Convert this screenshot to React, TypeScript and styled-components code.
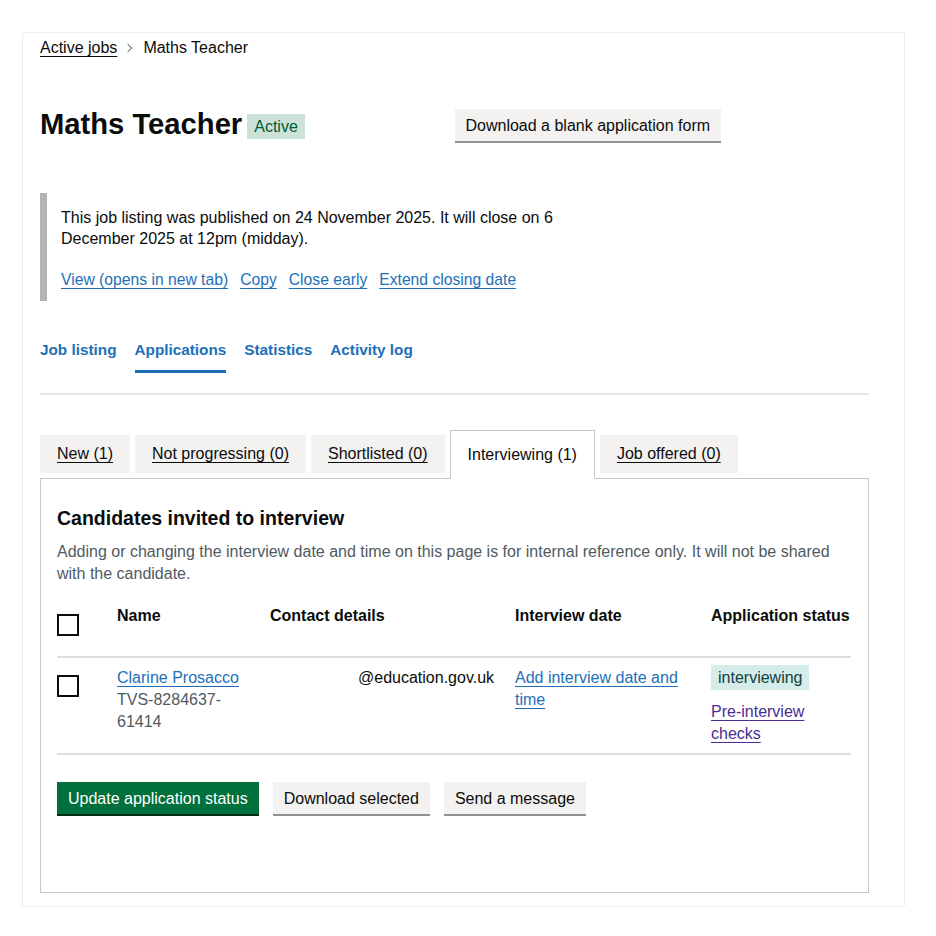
import styled, { createGlobalStyle } from "styled-components";

const Global = createGlobalStyle`
    html, body {
        margin: 0;
        background: #fff;
    }
    body {
        font-family: "Liberation Sans", Arial, sans-serif;
        color: #0b0c0c;
        -webkit-font-smoothing: antialiased;
    }
    * { box-sizing: border-box; }
`

const columns = "60px 153px 245px 196px 1fr"

const App = () => {
    return (<>
        <Global />
        <Card>
            <Breadcrumbs>
                <Crumb href="#">Active jobs</Crumb>
                <Chevron />
                <Current>Maths Teacher</Current>
            </Breadcrumbs>

            <TitleRow>
                <Title>
                    Maths Teacher
                    <Tag $tone="green">Active</Tag>
                </Title>
                <Button>Download a blank application form</Button>
            </TitleRow>

            <Inset>
                <InsetText>This job listing was published on 24 November 2025. It will close on 6 December 2025 at 12pm (midday).</InsetText>
                <InsetLinks>
                    <Link href="#">View (opens in new tab)</Link>
                    <Link href="#">Copy</Link>
                    <Link href="#">Close early</Link>
                    <Link href="#">Extend closing date</Link>
                </InsetLinks>
            </Inset>

            <SubNav>
                <SubNavItem href="#">Job listing</SubNavItem>
                <SubNavItem href="#" $active>Applications</SubNavItem>
                <SubNavItem href="#">Statistics</SubNavItem>
                <SubNavItem href="#">Activity log</SubNavItem>
            </SubNav>

            <TabList>
                <Tab>New (1)</Tab>
                <Tab>Not progressing (0)</Tab>
                <Tab>Shortlisted (0)</Tab>
                <Tab $active>Interviewing (1)</Tab>
                <Tab>Job offered (0)</Tab>
            </TabList>

            <Panel>
                <PanelHeading>Candidates invited to interview</PanelHeading>
                <Hint>Adding or changing the interview date and time on this page is for internal reference only. It will not be shared with the candidate.</Hint>

                <HeadRow>
                    <BoxCell $top={15}><Checkbox type="checkbox" /></BoxCell>
                    <HeadCell>Name</HeadCell>
                    <HeadCell>Contact details</HeadCell>
                    <HeadCell>Interview date</HeadCell>
                    <HeadCell>Application status</HeadCell>
                </HeadRow>

                <BodyRow>
                    <BoxCell $top={17}><Checkbox type="checkbox" /></BoxCell>
                    <Cell>
                        <Link href="#">Clarine Prosacco</Link>
                        <Muted>TVS-8284637-61414</Muted>
                    </Cell>
                    <Cell><Email>@education.gov.uk</Email></Cell>
                    <Cell><Link href="#">Add interview date and time</Link></Cell>
                    <StatusCell>
                        <Tag $tone="turquoise">interviewing</Tag>
                        <Checks href="#">Pre-interview checks</Checks>
                    </StatusCell>
                </BodyRow>

                <Actions>
                    <Button $primary>Update application status</Button>
                    <Button>Download selected</Button>
                    <Button>Send a message</Button>
                </Actions>
            </Panel>
        </Card>
    </>)
}

const Card = styled.div`
    margin: 32px 0 0 22px;
    width: 883px;
    border: 1px solid #ededed;
    border-radius: 2px;
    padding: 5px 35px 13px 17px;
    background: #fff;
`

const Breadcrumbs = styled.nav`
    display: flex;
    align-items: center;
    font-size: 16px;
    line-height: 20px;
`

const Crumb = styled.a`
    color: #0b0c0c;
    text-decoration: underline;
    text-decoration-thickness: 1px;
    text-underline-offset: 3px;
`

const Chevron = styled.span`
    width: 6px;
    height: 6px;
    border-top: 1px solid #6f777b;
    border-right: 1px solid #6f777b;
    transform: rotate(45deg);
    margin: 0 12px 0 8px;
`

const Current = styled.span``

const TitleRow = styled.div`
    margin-top: 49px;
    display: grid;
    grid-template-columns: 1fr 1fr;
    align-items: center;
`

const Title = styled.h1`
    margin: 0;
    display: flex;
    align-items: center;
    gap: 5px;
    font-size: 29.2px;
    line-height: 35px;
    font-weight: 700;
`

const Tag = styled.strong<{ $tone: "green" | "turquoise" }>`
    display: inline-block;
    align-self: flex-start;
    margin-top: ${p => p.$tone === "green" ? "7px" : "0"};
    padding: 2px 7px;
    font-size: 16px;
    line-height: 21px;
    font-weight: 400;
    background: ${p => p.$tone === "green" ? "#cce2d8" : "#d4ecea"};
    color: ${p => p.$tone === "green" ? "#005a30" : "#10403c"};
`

const Button = styled.button<{ $primary?: boolean }>`
    justify-self: start;
    font-family: inherit;
    font-size: 16px;
    line-height: 21px;
    padding: 6px 11px 5px;
    border: 0;
    border-radius: 0;
    background: ${p => p.$primary ? "#00703c" : "#f3f2f1"};
    color: ${p => p.$primary ? "#fff" : "#0b0c0c"};
    box-shadow: 0 2px 0 ${p => p.$primary ? "#002d18" : "#929191"};
    cursor: pointer;
`

const Inset = styled.div`
    margin-top: 51px;
    border-left: 7px solid #b1b4b6;
    padding: 14px 0 11px 14px;
    font-size: 16px;
    line-height: 21px;
`

const InsetText = styled.p`
    margin: 0;
    max-width: 520px;
`

const InsetLinks = styled.p`
    margin: 20px 0 0;
    display: flex;
    gap: 12px;
    font-size: 15.7px;
`

const Link = styled.a`
    color: #1d70b8;
    text-decoration: underline;
    text-decoration-thickness: 1px;
    text-underline-offset: 3px;
`

const SubNav = styled.nav`
    margin-top: 39px;
    display: flex;
    gap: 18px;
    padding-bottom: 20px;
    border-bottom: 2px solid #e6e6e6;
`

const SubNavItem = styled.a<{ $active?: boolean }>`
    font-size: 15.3px;
    line-height: 20px;
    font-weight: 700;
    color: #1d70b8;
    text-decoration: none;
    padding-bottom: 10px;
    border-bottom: 3px solid ${p => p.$active ? "#1d70b8" : "transparent"};
`

const TabList = styled.div`
    margin-top: 35px;
    display: flex;
    align-items: flex-end;
    gap: 5px;
    font-size: 16px;
    line-height: 21px;
`

const Tab = styled.a<{ $active?: boolean }>`
    position: relative;
    z-index: 1;
    color: #0b0c0c;
    text-decoration: ${p => p.$active ? "none" : "underline"};
    text-decoration-thickness: 1px;
    text-underline-offset: 3px;
    background: ${p => p.$active ? "#fff" : "#f3f2f1"};
    padding: ${p => p.$active ? "13px 17px 14px" : "8px 17px 9px"};
    margin-bottom: ${p => p.$active ? "-1px" : "5px"};
    border: ${p => p.$active ? "1px solid #c5c7c8" : "0"};
    border-bottom: 0;
`

const Panel = styled.section`
    border: 1px solid #c5c7c8;
    padding: 27px 17px 78px 16px;
    background: #fff;
`

const PanelHeading = styled.h2`
    margin: 0 0 10px;
    font-size: 19.5px;
    line-height: 25px;
    font-weight: 700;
`

const Hint = styled.p`
    margin: 0 0 14px;
    max-width: 785px;
    font-size: 16px;
    line-height: 22px;
    color: #505a5f;
`

const HeadRow = styled.div`
    display: grid;
    grid-template-columns: ${columns};
    height: 59px;
    border-bottom: 2px solid #dedede;
    font-size: 16px;
    line-height: 21px;
`

const BodyRow = styled.div`
    display: grid;
    grid-template-columns: ${columns};
    padding: 0 0 8px;
    border-bottom: 2px solid #dedede;
    font-size: 16px;
    line-height: 22px;
`

const BoxCell = styled.div<{ $top: number }>`
    padding-top: ${p => p.$top}px;
`

const HeadCell = styled.div`
    padding: 6px 12px 0 0;
    font-weight: 700;
    white-space: nowrap;
`

const Cell = styled.div`
    padding: 9px 16px 0 0;
    display: flex;
    flex-direction: column;
    align-items: flex-start;
`

const StatusCell = styled(Cell)`
    padding: 7px 0 0 0;
`

const Checkbox = styled.input`
    appearance: none;
    display: block;
    margin: 0;
    width: 22px;
    height: 22px;
    border: 2px solid #0b0c0c;
    background: #fff;
`

const Muted = styled.span`
    color: #505a5f;
`

const Email = styled.span`
    padding-left: 88px;
`

const Checks = styled(Link)`
    margin-top: 11px;
    color: #4c2c92;
`

const Actions = styled.div`
    margin-top: 27px;
    display: flex;
    gap: 14px;
`

export default App
